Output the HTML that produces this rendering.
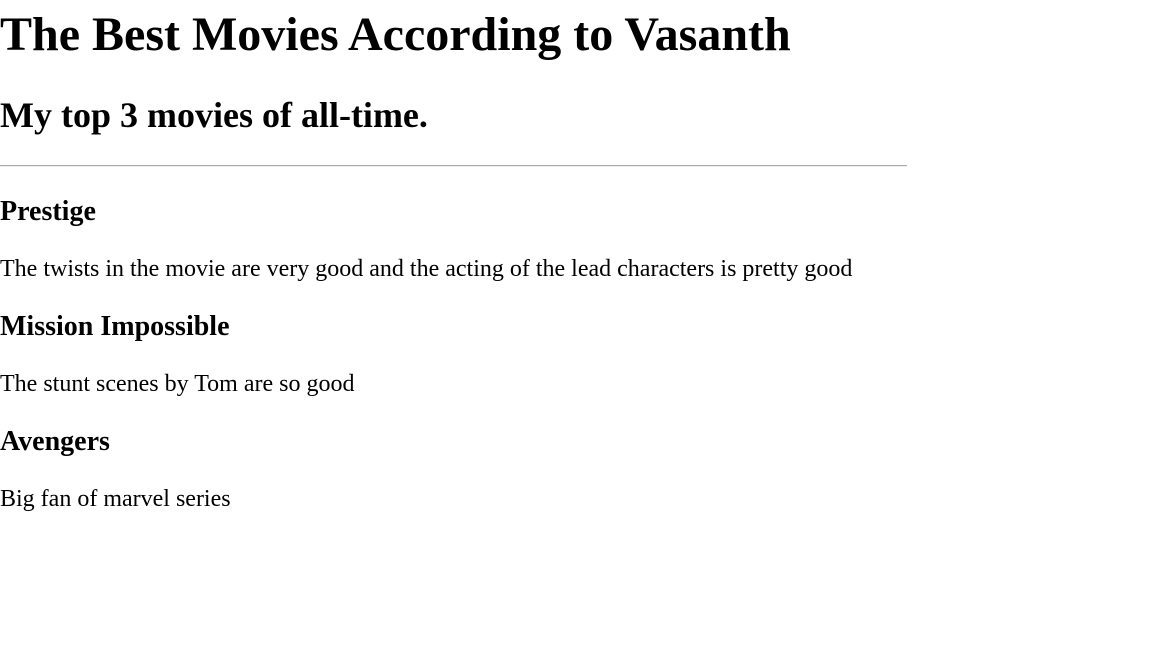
<!DOCTYPE html>
<html><head><meta charset="utf-8"><style>
body{margin:0;font-family:"Liberation Serif",serif;color:#000;background:#fff}
h1{font-size:48px;margin:0 0 22px;line-height:70px;font-weight:bold}
h2{font-size:36px;margin:0;line-height:46px}
hr{width:907px;margin:27px 0 0;border:0;border-top:1px solid #aaa;border-bottom:1px solid #eee;height:0}
h3{font-size:28px;margin:23px 0 0;line-height:42px}
p{font-size:24px;margin:22px 0 0;line-height:28px}
</style></head><body>
<h1>The Best Movies According to Vasanth</h1>
<h2>My top 3 movies of all-time.</h2>
<hr>
<h3 style="margin-top:24px">Prestige</h3>
<p>The twists in the movie are very good and the acting of the lead characters is pretty good</p>
<h3>Mission Impossible</h3>
<p>The stunt scenes by Tom are so good</p>
<h3>Avengers</h3>
<p>Big fan of marvel series</p>
</body></html>
